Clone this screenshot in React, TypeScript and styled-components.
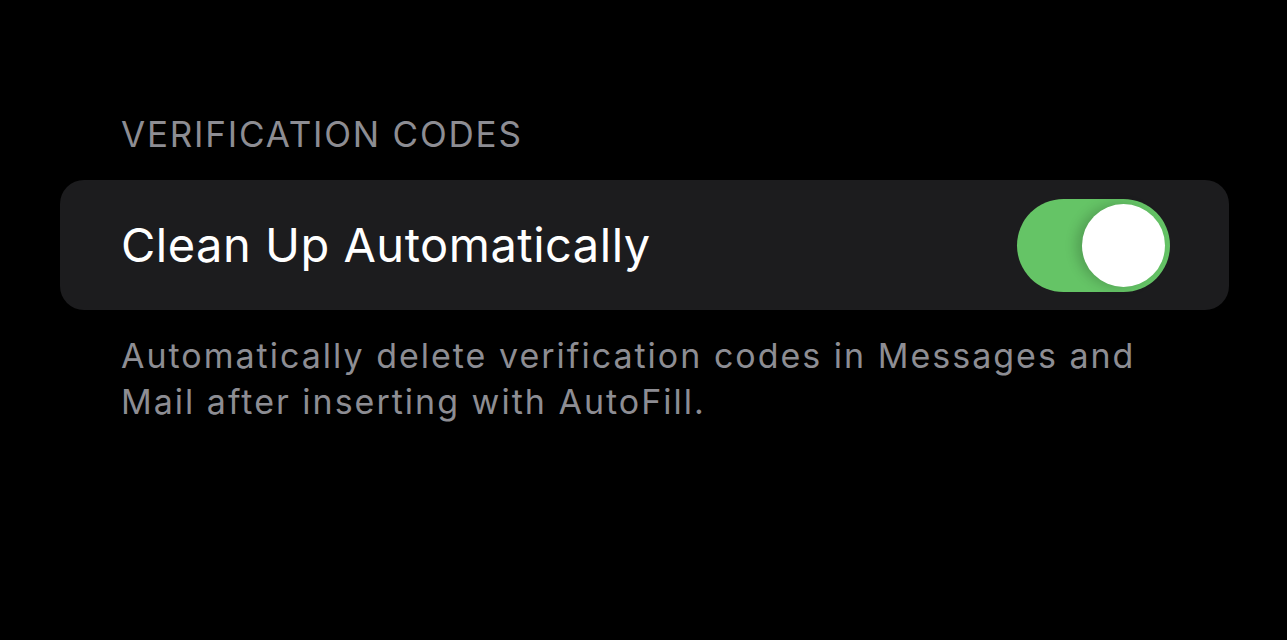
import styled, { createGlobalStyle } from "styled-components";
import { useState } from "react";

const GlobalStyle = createGlobalStyle`
  html, body {
    margin: 0;
    padding: 0;
    background: #000000;
  }
  body {
    font-family: "Inter", "Noto Sans", sans-serif;
    -webkit-font-smoothing: antialiased;
  }
`;

const App = () => {
  const [on, setOn] = useState(true);

  return (
    <>
      <GlobalStyle />
      <Page>
        <Section>
          <SectionHeader>VERIFICATION CODES</SectionHeader>
          <Card>
            <Row>
              <RowLabel>Clean Up Automatically</RowLabel>
              <Toggle $on={on} onClick={() => setOn(!on)}>
                <Knob $on={on} />
              </Toggle>
            </Row>
          </Card>
          <Footer>
            Automatically delete verification codes in Messages and
            <br />
            Mail after inserting with AutoFill.
          </Footer>
        </Section>
      </Page>
    </>
  );
};

export default App;

const Page = styled.div`
  width: 1287px;
  height: 640px;
  background: #000000;
  padding: 112px 58px 0 60px;
  box-sizing: border-box;
`;

const Section = styled.div`
  display: flex;
  flex-direction: column;
`;

const SectionHeader = styled.div`
  color: #8d8d93;
  font-size: 35px;
  line-height: 44px;
  letter-spacing: 1.8px;
  padding-left: 61px;
  margin-bottom: 24px;
`;

const Card = styled.div`
  background: #1c1c1e;
  border-radius: 24px;
  height: 130px;
  display: flex;
  align-items: center;
`;

const Row = styled.div`
  flex: 1;
  display: flex;
  align-items: center;
  justify-content: space-between;
  padding: 0 59px 0 61px;
`;

const RowLabel = styled.div`
  color: #ffffff;
  font-size: 47px;
  line-height: 56px;
  letter-spacing: 0.5px;
`;

const Toggle = styled.div<{ $on: boolean }>`
  position: relative;
  width: 153px;
  height: 93px;
  border-radius: 47px;
  background: ${(p) => (p.$on ? "#65c466" : "#39393d")};
  cursor: pointer;
`;

const Knob = styled.div<{ $on: boolean }>`
  position: absolute;
  top: 5px;
  left: ${(p) => (p.$on ? "65px" : "5px")};
  width: 83px;
  height: 83px;
  border-radius: 50%;
  background: #ffffff;
  box-shadow: -6px 0 12px rgba(0, 0, 0, 0.18);
`;

const Footer = styled.div`
  color: #8d8d93;
  font-size: 34px;
  line-height: 46px;
  letter-spacing: 2px;
  padding-left: 61px;
  margin-top: 23px;
`;
